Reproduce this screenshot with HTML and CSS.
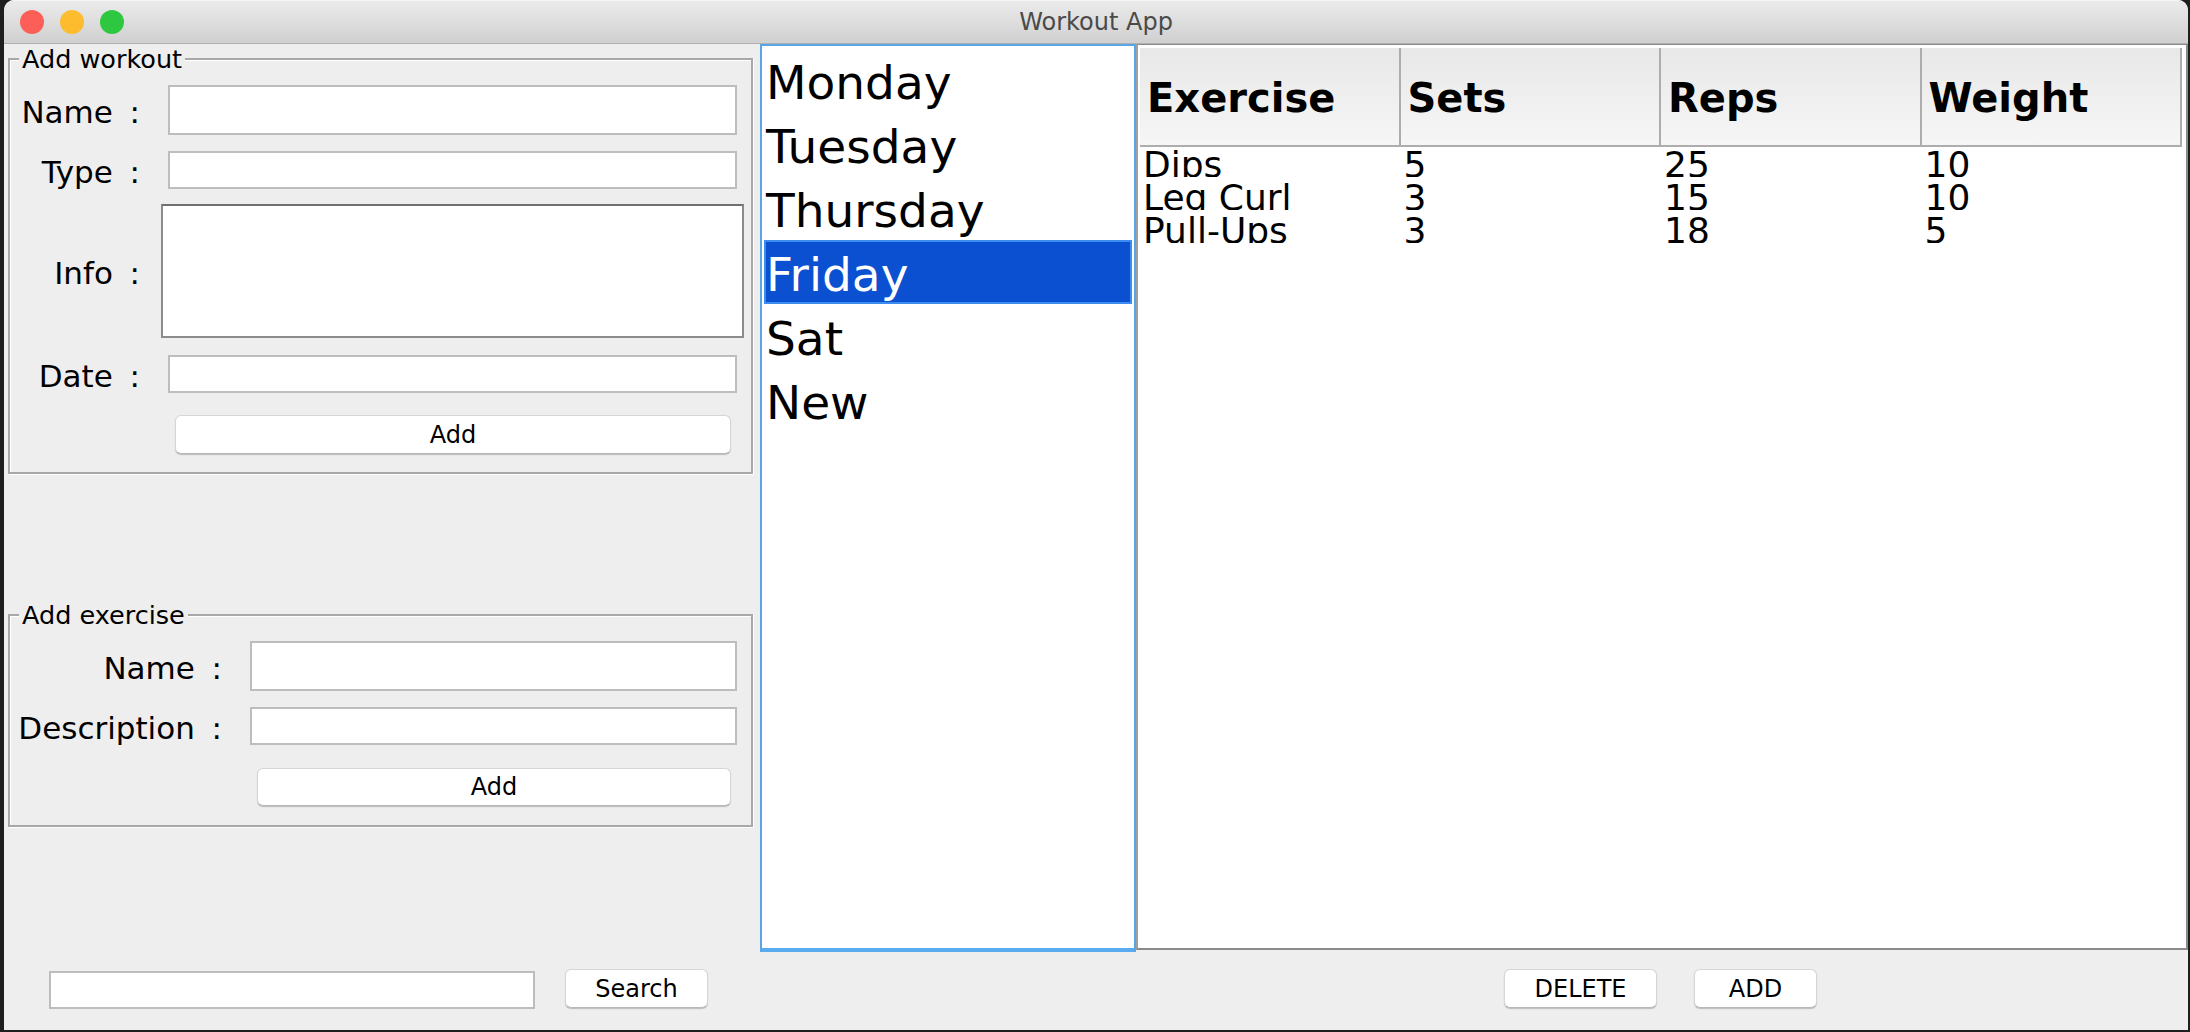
FILE: index.html
```html
<!DOCTYPE html>
<html lang="en">
<head>
<meta charset="utf-8">
<title>Workout App</title>
<link rel="stylesheet" href="styles.css">
</head>
<body>
<div class="window">
  <header class="titlebar">
    <div class="lights"><span class="light red"></span><span class="light yellow"></span><span class="light green"></span></div>
    <div class="title">Workout App</div>
  </header>
  <div class="content">
    <aside class="sidebar">
      <fieldset class="group workout">
        <legend>Add workout</legend>
        <div class="row name"><label>Name&nbsp; :</label><div class="field"></div></div>
        <div class="row type"><label>Type&nbsp; :</label><div class="field"></div></div>
        <div class="row info"><label>Info&nbsp; :</label><div class="area"></div></div>
        <div class="row date"><label>Date&nbsp; :</label><div class="field"></div></div>
        <div class="btnrow"><button class="btn wide">Add</button></div>
      </fieldset>
      <fieldset class="group exercise">
        <legend>Add exercise</legend>
        <div class="row ename"><label>Name&nbsp; :</label><div class="field"></div></div>
        <div class="row edesc"><label>Description&nbsp; :</label><div class="field"></div></div>
        <div class="btnrow"><button class="btn wide">Add</button></div>
      </fieldset>
    </aside>
    <ul class="days">
      <li>Monday</li>
      <li>Tuesday</li>
      <li>Thursday</li>
      <li class="selected">Friday</li>
      <li>Sat</li>
      <li>New</li>
    </ul>
    <section class="table">
      <div class="thead"><div>Exercise</div><div>Sets</div><div>Reps</div><div>Weight</div></div>
      <div class="trow"><div>Dips</div><div>5</div><div>25</div><div>10</div></div>
      <div class="trow"><div>Leg Curl</div><div>3</div><div>15</div><div>10</div></div>
      <div class="trow"><div>Pull-Ups</div><div>3</div><div>18</div><div>5</div></div>
    </section>
  </div>
  <footer class="footer">
    <div class="search"><div class="field"></div><button class="btn searchbtn">Search</button></div>
    <div class="actions"><button class="btn deletebtn">DELETE</button><button class="btn addbtn">ADD</button></div>
  </footer>
</div>
</body>
</html>
```
FILE: styles.css
```css
* { box-sizing: border-box; }
html, body { margin: 0; height: 100%; }
body { background: #1e1e1e; padding: 0 2px 2px 4px; overflow: hidden; font-family: "DejaVu Sans", sans-serif; color: #000; }
.window { height: 100%; display: flex; flex-direction: column; background: #eeeeee; border-radius: 10px 10px 0 0; overflow: hidden; }
.titlebar { flex: none; height: 44px; position: relative; display: flex; align-items: center; justify-content: center; background: linear-gradient(#ebebeb, #d0d0d0); border-top: 1px solid #f4f4f4; border-bottom: 1px solid #b0b0b0; }
.lights { position: absolute; left: 16px; top: 9px; display: flex; gap: 16px; }
.light { width: 24px; height: 24px; border-radius: 50%; }
.red { background: #fc5f57; }
.yellow { background: #fdbc2e; }
.green { background: #2dc840; }
.title { font-size: 24px; color: #4a4a4a; }
.content { flex: 1; display: flex; min-height: 0; }
.sidebar { flex: none; width: 756px; padding: 3px 0 0 4px; display: flex; flex-direction: column; }
.group { margin: 0; padding: 0; width: 745px; position: relative; border: 2px solid #a8a8a8; box-shadow: 1px 1px 0 #fff, inset 1px 1px 0 #fff; }
.group legend { font-size: 25.5px; line-height: 24px; padding: 0 3px; margin-left: 9px; background: #eee; }
.workout { height: 427px; }
.exercise { height: 224px; margin-top: 129px; }
.row { display: flex; align-items: center; margin: 0 14px 0 0; }
.row label { flex: none; font-size: 31px; text-align: right; white-space: pre; padding-top: 3px; word-spacing: -1.5px; }
.workout .row label { width: 130px; margin-right: 28px; }
.exercise .row label { width: 212px; margin-right: 28px; }
.field { flex: 1; background: #fff; border: 2px solid #bdbdbd; height: 100%; }
.name { height: 50px; margin-top: 14px; }
.type { height: 38px; margin-top: 16px; }
.info { height: 134px; margin: 15px 7px 0 0; }
.area { flex: 1; height: 100%; background: #fff; border: 2px solid #8c8c8c; border-top-color: #707070; margin-left: -7px; }
.date { height: 38px; margin-top: 17px; }
.btnrow { display: flex; justify-content: flex-end; margin: 22px 20px 0 0; }
.btn { font-family: "DejaVu Sans", sans-serif; font-size: 24px; color: #000; background: #fff; border: 1px solid #d6d6d6; border-bottom-color: #b8b8b8; border-radius: 6px; box-shadow: 0 1px 1px #bbb; padding: 0; height: 39px; }
.workout .wide { width: 556px; }
.exercise .wide { width: 474px; height: 38px; }
.ename { height: 50px; margin-top: 14px; }
.edesc { height: 38px; margin-top: 16px; }
.exercise .btnrow { margin-top: 23px; }
.days { flex: none; width: 376px; margin: 0 0 -2px; padding: 2px 2px 0 2px; list-style: none; background: #fff; border: 2px solid #5aa5e6; border-bottom: 4px solid #5aaaf0; }
.days li { height: 64px; font-size: 47px; padding-left: 0; border: 2px solid transparent; line-height: 66px; white-space: nowrap; }
.days .selected { background: #0a50d0; color: #fff; border-color: #3c8cf0; }
.table { flex: 1; background: #fff; border: 2px solid #8a8a8a; border-left-color: #a0a0a0; padding: 3px 4px 0 2px; margin-top: -1px; }
.thead { display: grid; grid-template-columns: repeat(4, 1fr); height: 99px; background: linear-gradient(#e8e8e8, #f6f6f6); border-bottom: 2px solid #adadad; position: relative; z-index: 1; }
.thead div { font-size: 40px; font-weight: 700; padding-left: 7px; line-height: 100px; height: 97px; border-right: 2px solid #adadad; }
.trow { display: grid; grid-template-columns: repeat(4, 1fr); height: 33px; overflow: hidden; }
.thead + .trow { margin-top: -3px; }
.trow div { font-size: 36px; line-height: 42px; padding-left: 3px; white-space: nowrap; }
.footer { flex: none; height: 80px; display: flex; align-items: flex-start; }
.search { width: 756px; display: flex; padding: 19px 0 0 45px; }
.search .field { flex: none; width: 486px; height: 38px; margin-top: 2px; }
.searchbtn { width: 143px; margin-left: 30px; }
.actions { margin-left: 744px; padding-top: 19px; display: flex; gap: 37px; }
.deletebtn { width: 153px; }
.addbtn { width: 123px; }
```
